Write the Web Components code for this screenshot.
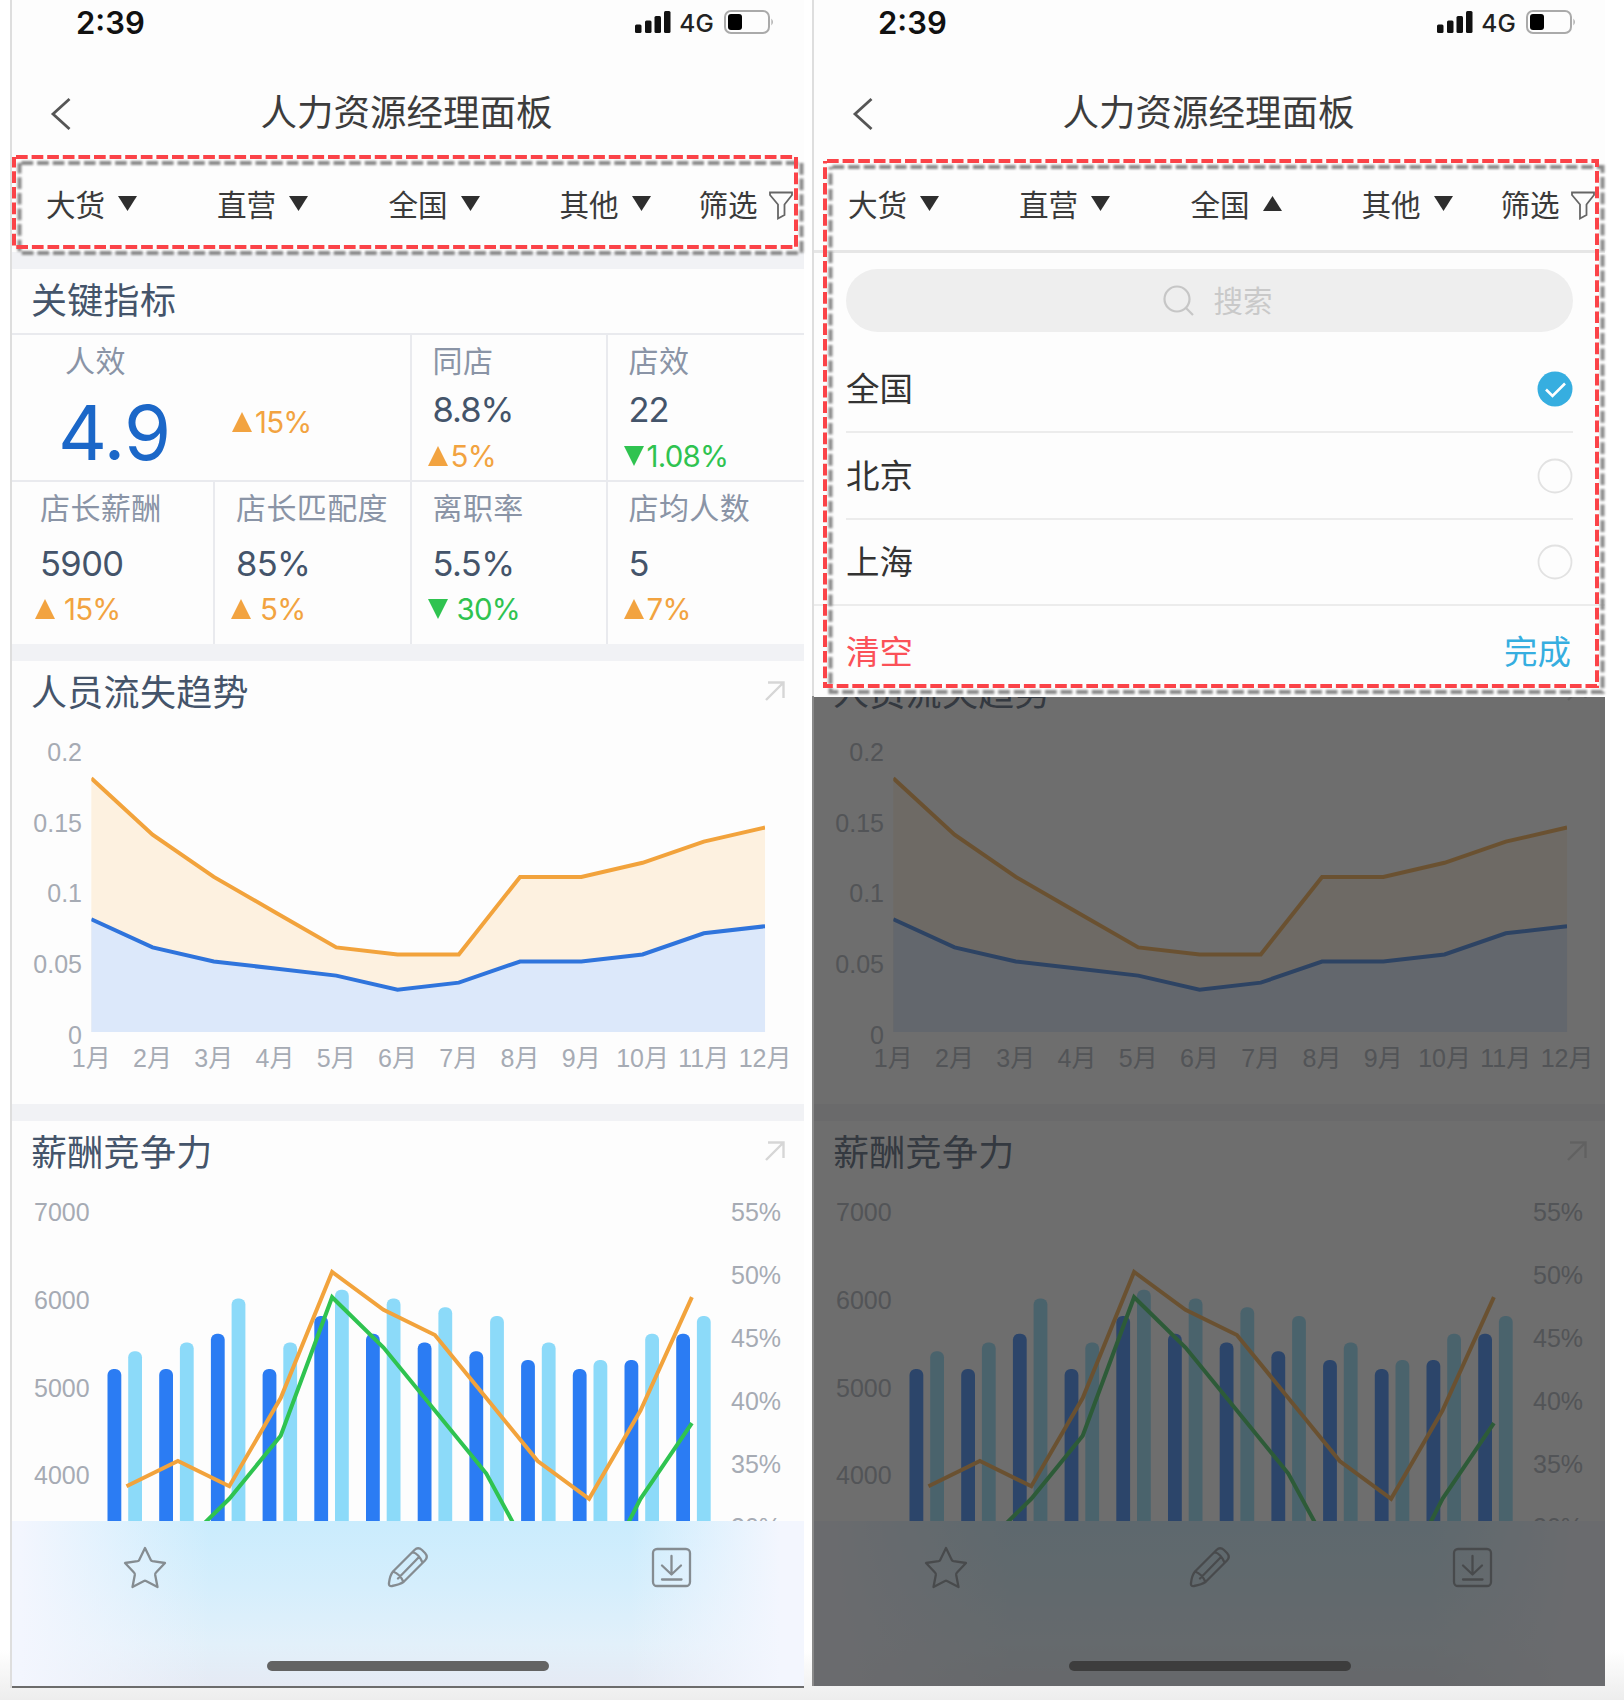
<!DOCTYPE html>
<html lang="zh-CN">
<head>
<meta charset="utf-8">
<title>人力资源经理面板</title>
<style>
    html { height: 100%; }
    body {
        --ink: #44546a;
        --muted: #8a94a6;
        --axis: #a6abb4;
        --line: #e9eaee;
        --band: #f1f2f5;
        --up: #f2a340;
        --down: #2fc350;
        --accent: #36aee0;
        margin: 0;
        height: 1700px;
        overflow: hidden;
        background: linear-gradient(#fff 1650px, #ededed 1700px);
        font-family: Inter, "Noto Sans CJK SC", sans-serif;
        color: #444;
    }
    main { position: relative; display: flex; align-items: flex-start; gap: 8px; padding-left: 10px; }
</style>
</head>
<body>
<main>
    <app-phone>
        <status-bar slot="top"></status-bar>
        <nav-bar slot="top">人力资源经理面板</nav-bar>
        <filter-bar slot="top"></filter-bar>
        <hr-dashboard></hr-dashboard>
        <tab-bar></tab-bar>
    </app-phone>
    <app-phone dimmed>
        <status-bar slot="top"></status-bar>
        <nav-bar slot="top">人力资源经理面板</nav-bar>
        <filter-bar slot="top" open="2"></filter-bar>
        <hr-dashboard></hr-dashboard>
        <tab-bar></tab-bar>
        <filter-panel slot="overlay">
            <filter-option checked>全国</filter-option>
            <filter-option>北京</filter-option>
            <filter-option>上海</filter-option>
        </filter-panel>
    </app-phone>
    <dashed-callout style="left:12px;top:155px" width="786" height="94"></dashed-callout>
    <dashed-callout style="left:823px;top:159px" width="776" height="529"></dashed-callout>
</main>

<script>
function attach(el, css, html) {
    const root = el.attachShadow({ mode: 'open' });
    root.innerHTML = `<style>:host, * { box-sizing: border-box; } ${css}</style>${html}`;
    return root;
}

class AppPhone extends HTMLElement {
    constructor() {
        super();
        attach(this, `
            :host { display: block; flex: none; width: 794px; border-left: 2px solid #dedede; background: #fdfdfd; }
            .screen { position: relative; height: 1436px; border-bottom: 3px solid #6c6c6c; }
            :host([dimmed]) { width: 793px; border-image: linear-gradient(#dedede 696px, #8a8a8a 696px) 1; }
            :host([dimmed]) .screen { height: 1434px; border: 0; }
            .top { display: block; height: 252px; background: #fdfdfd; }
            .dim { display: none; position: absolute; inset: 0; background: rgba(45, 45, 45, .69); }
            :host([dimmed]) .dim { display: block; }
        `, `
            <div class="top"><slot name="top"></slot></div>
            <div class="screen">
                <slot></slot>
                <div class="dim"></div>
                <slot name="overlay"></slot>
            </div>
        `);
    }
}

class StatusBar extends HTMLElement {
    constructor() {
        super();
        attach(this, `
            :host { display: flex; align-items: center; width: 791px; height: 44px; padding: 0 29px 0 64px; color: #111; }
            .time { flex: 1; font-size: 31px; font-weight: 600; }
            .net { font-size: 24.5px; font-weight: 500; margin: 2px 10px 0 8px; letter-spacing: .2px; color: #222; }
            svg { display: block; }
        `, `
            <span class="time">2:39</span>
            <svg width="36" height="22" fill="#111">
                <rect x="0" y="13.5" width="6.5" height="8.5" rx="1.5"/>
                <rect x="10" y="9.5" width="6.5" height="12.5" rx="1.5"/>
                <rect x="19.5" y="5" width="6.5" height="17" rx="1.5"/>
                <rect x="29" y="0" width="6.5" height="22" rx="1.5"/>
            </svg>
            <span class="net">4G</span>
            <svg width="50" height="24">
                <rect x="1" y="1" width="44" height="22" rx="6" fill="none" stroke="#aaa" stroke-width="2"/>
                <rect x="4" y="4" width="14" height="16" rx="3" fill="#000"/>
                <path d="M47.5 8.5q2.5 3.5 0 7z" fill="#999"/>
            </svg>
        `);
    }
}

class NavBar extends HTMLElement {
    constructor() {
        super();
        attach(this, `
            :host { display: grid; grid-template-columns: 1fr auto 1fr; align-items: center; width: 791px; height: 114px; padding: 24px 2px 0 0; }
            svg { margin-left: 38px; }
            h1 { margin: 0; font-size: 36.5px; line-height: 50px; font-weight: 400; color: #3c3c3c; }
        `, `
            <svg width="22" height="34" fill="none" stroke="#555" stroke-width="2.8"><path d="M19.5 3L3 18L19.5 33"/></svg>
            <h1><slot></slot></h1>
        `);
    }
}

class FilterBar extends HTMLElement {
    connectedCallback() {
        const open = this.getAttribute('open');
        const items = ['大货', '直营', '全国', '其他'].map((name, i) => {
            const d = String(i) === open ? 'M0 15L9.5 0L19 15Z' : 'M0 0H19L9.5 15Z';
            return `<span>${name}<svg width="19" height="15" fill="#2e2e2e"><path d="${d}"/></svg></span>`;
        }).join('');
        attach(this, `
            :host { display: grid; grid-template-columns: 171px 171.5px 171px 139px auto; align-items: center; height: 94px; padding-left: 34px; font-size: 29.6px; color: #3a3a3a; }
            span { display: flex; align-items: center; gap: 13px; white-space: nowrap; line-height: 40px; }
            span svg { margin-top: -3px; }
            .more { gap: 11px; }
            .more svg { margin-top: 0; }
        `, `${items}
            <span class="more">筛选<svg width="24" height="29" fill="none" stroke="#666" stroke-width="1.8"><path d="M1 1.500H23V4L15.500 13.500V24L9 27.500V13.500L1 4Z"/></svg></span>
        `);
    }
}

class KpiCell extends HTMLElement {
    connectedCallback() {
        const { label, value, delta, down, gap } = this.dataset;
        const arrow = down !== undefined ? 'M0 1H20L10 21Z' : 'M0 21H20L10 1Z';
        attach(this, `
            :host { display: block; border-right: 2px solid var(--line); border-bottom: 2px solid var(--line); padding: 5px 0 0 21px; white-space: nowrap; }
            .label { font-size: 30px; line-height: 42px; letter-spacing: .4px; color: var(--muted); }
            .value { font-size: 34.5px; line-height: 44px; margin-top: 6px; color: var(--ink); letter-spacing: -1px; }
            .delta { display: flex; align-items: center; gap: ${gap || 3}px; margin: 6px 0 0 -5px; font-size: 29.5px; line-height: 36px; letter-spacing: -.8px; color: var(--${down !== undefined ? 'down' : 'up'}); }
            :host([tall]) .value { margin-top: 13px; letter-spacing: -.6px; }
            :host([tall]) .delta { margin-top: 5px; }
            :host([data-big]) { display: grid; grid-template-columns: 176px auto; align-content: start; padding-left: 46px; }
            :host([data-big]) .label { grid-column: 1 / 3; padding-left: 7px; }
            :host([data-big]) .value { font-size: 76px; line-height: 92px; margin: 4px 0 0 0; letter-spacing: -1px; color: #1b67c8; }
            :host([data-big]) .delta { align-self: start; margin: 22px 0 0 -2px; }
            :host([tall]) { border-bottom: 0; }
            :host([last]) { border-right: 0; }
        `, `
            <div class="label">${label}</div>
            <div class="value">${value}</div>
            <div class="delta"><svg width="20" height="22" fill="currentColor"><path d="${arrow}"/></svg>${delta}</div>
        `);
    }
}

class DashCard extends HTMLElement {
    constructor() {
        super();
        attach(this, `
            :host { display: block; border-top: 17px solid var(--band); background: #fdfdfd; }
            header { display: flex; justify-content: space-between; align-items: center; width: 791px; height: 63px; padding: 0 17px 0 19px; }
            h2 { margin: 0; font-size: 36px; line-height: 50px; letter-spacing: .3px; font-weight: 400; color: var(--ink); }
            svg { margin-top: -4px; }
            :host([plain]) svg { display: none; }
            :host([plain]) header { height: 64px; }
        `, `
            <header>
                <h2><slot name="title"></slot></h2>
                <svg width="22" height="22" fill="none" stroke="#d6d6d6" stroke-width="2.4"><path d="M2 20L19 3M4 2.5H19.5V18"/></svg>
            </header>
            <slot></slot>
        `);
    }
}

const CHART_CSS = `
    :host { display: block; }
    svg { display: block; }
    text { font: 25px "Liberation Sans", "Noto Sans CJK SC", sans-serif; fill: var(--axis); }
`;

class TrendChart extends HTMLElement {
    constructor() {
        super();
        const lost = [.18, .14, .11, .085, .06, .055, .055, .11, .11, .12, .135, .145];
        const base = [.08, .06, .05, .045, .04, .03, .035, .05, .05, .055, .07, .075];
        const x = i => 79.3 + i * 61.25;
        const y = v => 308 - v * 1410;
        const line = data => data.map((v, i) => `${x(i)},${y(v)}`).join(' ');
        const area = (data, fill) => `<polygon fill="${fill}" points="${x(0)},308 ${line(data)} ${x(11)},308"/>`;
        const ticks = [0, .05, .1, .15, .2].map((v, i) =>
            `<text x="70" y="${319.5 - i * 70.6}" text-anchor="end">${v}</text>`).join('');
        const months = lost.map((_, i) =>
            `<text x="${x(i)}" y="343" text-anchor="middle">${i + 1}月</text>`).join('');
        attach(this, CHART_CSS, `
            <svg width="791" height="380">
                ${area(lost, '#fdf1e0')}${area(base, '#dce8fa')}
                <clipPath id="plot"><rect x="79.3" y="0" width="673.8" height="320"/></clipPath>
                <g fill="none" stroke-width="4" clip-path="url(#plot)">
                    <polyline stroke="#f2a33c" points="${line(lost)}"/>
                    <polyline stroke="#2f74dc" points="${line(base)}"/>
                </g>
                ${ticks}${months}
            </svg>
        `);
    }
}

class SalaryChart extends HTMLElement {
    constructor() {
        super();
        const own = [5200, 5200, 5600, 5200, 5800, 5600, 5500, 5400, 5300, 5200, 5300, 5600];
        const market = [5400, 5500, 6000, 5500, 6100, 6000, 5900, 5800, 5500, 5300, 5600, 5800];
        const orange = [33, 35, 33, 40, 50, 47, 45, 40, 35, 32, 39, 48];
        const green = [27, 28, 32, 37, 48, 44, 39, 34, 26.5, 24, 32, 38];
        const bars = (data, x0, fill) => data.map((v, i) =>
            `<rect x="${x0 + i * 51.7}" y="${114.5 + (6000 - v) * .088}" width="13.8" height="400" rx="6" fill="${fill}"/>`).join('');
        const line = data => data.map((v, i) => `${114.5 + i * 51.4},${88 + (50 - v) * 12.6}`).join(' ');
        const left = [7000, 6000, 5000, 4000].map((v, i) => `<text x="22" y="${37 + i * 87.8}">${v}</text>`).join('');
        const right = [55, 50, 45, 40, 35, 30].map((v, i) => `<text x="719" y="${37 + i * 63}">${v}%</text>`).join('');
        attach(this, CHART_CSS, `
            <svg width="791" height="338">
                ${bars(own, 95.5, '#2b7cf3')}${bars(market, 116.2, '#8cdaf9')}
                <g fill="none" stroke-width="4">
                    <polyline stroke="#f2a33c" points="${line(orange)}"/>
                    <polyline stroke="#2fc350" points="${line(green)}"/>
                </g>
                ${left}${right}
            </svg>
        `);
    }
}

class HrDashboard extends HTMLElement {
    constructor() {
        super();
        attach(this, `
            :host { display: block; height: 1269px; overflow: hidden; }
            .kpis { display: grid; grid-template-columns: 203px 196.5px 196px 1fr; grid-template-rows: 147px 162px; height: 311px; border-top: 2px solid var(--line); }
            .wide { grid-column: span 2; }
            .first { padding-left: 28px; }
        `, `
            <dash-card plain>
                <span slot="title">关键指标</span>
                <div class="kpis">
                    <kpi-cell class="wide" data-big data-label="人效" data-value="4.9" data-delta="15%"></kpi-cell>
                    <kpi-cell data-label="同店" data-value="8.8%" data-delta="5%"></kpi-cell>
                    <kpi-cell last data-label="店效" data-value="22" data-delta="1.08%" data-down data-gap="3"></kpi-cell>
                    <kpi-cell class="first" tall data-label="店长薪酬" data-value="5900" data-delta="15%" data-gap="9"></kpi-cell>
                    <kpi-cell tall data-label="店长匹配度" data-value="85%" data-delta="5%" data-gap="9"></kpi-cell>
                    <kpi-cell tall data-label="离职率" data-value="5.5%" data-delta="30%" data-down data-gap="9"></kpi-cell>
                    <kpi-cell tall last data-label="店均人数" data-value="5" data-delta="7%"></kpi-cell>
                </div>
            </dash-card>
            <dash-card><span slot="title">人员流失趋势</span><trend-chart></trend-chart></dash-card>
            <dash-card><span slot="title">薪酬竞争力</span><salary-chart></salary-chart></dash-card>
        `);
    }
}

class TabBar extends HTMLElement {
    constructor() {
        super();
        attach(this, `
            :host {
                display: flex; flex-direction: column; align-items: center; justify-content: space-between;
                height: 165px; padding: 24px 0 15px;
                background:
                    linear-gradient(90deg, #f3f6fe 1%, rgba(243, 246, 254, 0) 25%, rgba(243, 246, 254, 0) 78%, #f3f6fe 97%),
                    linear-gradient(#caecfd, #d5eefc 40%, #e2f0fa 75%, #e5eaf4);
            }
            .icons { display: flex; justify-content: space-between; width: 571px; }
            svg { fill: none; stroke: #858c91; stroke-width: 2.3; stroke-linejoin: round; stroke-linecap: round; }
            .home { width: 282px; height: 10px; border-radius: 5px; background: #636363; }
        `, `
            <div class="icons">
                <svg width="44" height="44"><path d="M22 3L27.8 15Q28.3 16 29.5 16.2L42 18L33 27.5Q32 28.5 32.2 30L34.5 42L23 36Q22 35.5 21 36L9.5 42L11.8 30Q12 28.5 11 27.5L2 18L14.5 16.2Q15.7 16 16.2 15Z"/></svg>
                <svg width="44" height="44"><path d="M28.5 5Q32 1.5 36 5L39 8Q42.5 12 39 15.5L17.5 37Q14 39.5 6 41Q2.5 41.5 3 38Q4 30 7 26.5ZM26.5 7Q33 9 36.5 17.5M33 12L12 33.5M7 26.5Q14 29 17.5 37"/></svg>
                <svg width="44" height="44"><rect x="3" y="4" width="37" height="37" rx="4"/><path d="M21.5 11V29M12 20.5L21.5 29.5L31 20.5M12 34.5H31.5"/></svg>
            </div>
            <div class="home"></div>
        `);
    }
}

class FilterOption extends HTMLElement {
    constructor() {
        super();
        const mark = this.hasAttribute('checked')
            ? '<circle cx="18" cy="18" r="17.5" fill="#36aee0"/><path d="M9 18.5L15.5 25L28 12.5" fill="none" stroke="#fff" stroke-width="2.6"/>'
            : '<circle cx="18" cy="18" r="16.5" fill="none" stroke="#e2e2e2" stroke-width="1.8"/>';
        attach(this, `
            :host { display: flex; align-items: center; justify-content: space-between; height: 86.4px; border-bottom: 2px solid #ececec; font-size: 33.5px; line-height: 44px; color: #333; }
            :host(:last-of-type) { border-bottom-color: transparent; }
        `, `<span><slot></slot></span><svg width="36" height="36">${mark}</svg>`);
    }
}

class FilterPanel extends HTMLElement {
    constructor() {
        super();
        attach(this, `
            :host { position: absolute; inset: -2px 0 auto 0; display: flex; flex-direction: column; height: 447px; border-top: 3px solid #e6e6e6; background: #fdfdfd; }
            .search { display: flex; flex: none; align-items: center; justify-content: center; gap: 18px; height: 63px; margin: 16px 32px 15px; padding-left: 17px; border-radius: 32px; background: #eee; font-size: 29.5px; line-height: 40px; color: #c9c9c9; }
            .list { margin: 0 32px; }
            footer { display: flex; flex: 1; align-items: center; justify-content: space-between; margin-top: -2px; padding: 0 34px 0 32px; border-top: 2px solid #ececec; font-size: 33.5px; line-height: 44px; }
            .clear { color: #fb5158; }
            .done { color: var(--accent); }
        `, `
            <div class="search">
                <svg width="32" height="32" fill="none" stroke="#c6c6c6" stroke-width="2.2"><circle cx="14" cy="14" r="12.5"/><path d="M23 23L30 30"/></svg>
                <span>搜索</span>
            </div>
            <div class="list"><slot></slot></div>
            <footer><span class="clear">清空</span><span class="done">完成</span></footer>
        `);
    }
}

// Red dashed frame with an offset grey shadow, laid over the screens
class DashedCallout extends HTMLElement {
    connectedCallback() {
        const w = +this.getAttribute('width');
        const h = +this.getAttribute('height');
        const d = `M4 2H${w - 2}V${h - 2}H2V2`;
        attach(this, `
            :host { position: absolute; pointer-events: none; }
            svg { display: block; fill: none; stroke-width: 4; stroke-dasharray: 11.7 3.9; }
            .shadow { filter: blur(1px); }
        `, `
            <svg width="${w + 10}" height="${h + 10}">
                <path class="shadow" d="${d}" transform="translate(5.5 6)" stroke="#8a8a8a"/>
                <path d="${d}" stroke="#fb4348"/>
            </svg>
        `);
    }
}

customElements.define('app-phone', AppPhone);
customElements.define('status-bar', StatusBar);
customElements.define('nav-bar', NavBar);
customElements.define('filter-bar', FilterBar);
customElements.define('kpi-cell', KpiCell);
customElements.define('dash-card', DashCard);
customElements.define('trend-chart', TrendChart);
customElements.define('salary-chart', SalaryChart);
customElements.define('hr-dashboard', HrDashboard);
customElements.define('tab-bar', TabBar);
customElements.define('filter-option', FilterOption);
customElements.define('filter-panel', FilterPanel);
customElements.define('dashed-callout', DashedCallout);
</script>
</body>
</html>
